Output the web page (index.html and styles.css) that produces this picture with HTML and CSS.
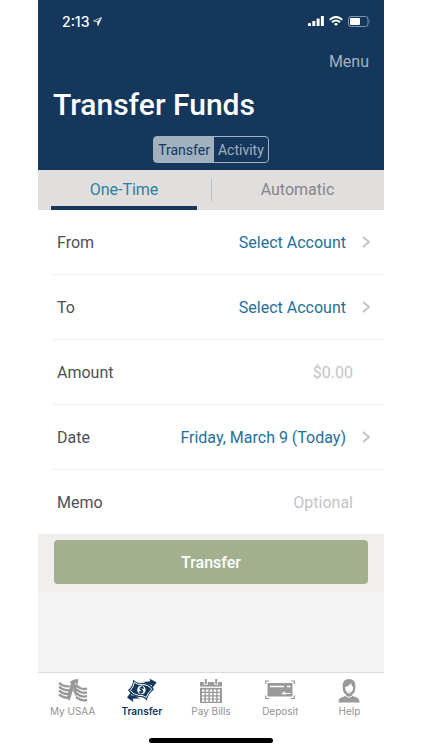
FILE: index.html
```html
<!DOCTYPE html>
<html lang="en">
<head>
    <meta charset="UTF-8">
    <meta name="viewport" content="width=device-width, initial-scale=1.0">
    <title>Transfer Funds</title>
    <link rel="stylesheet" href="styles.css">
</head>
<body>
    <div class="app">
        <header class="header">
            <div class="status-bar">
                <span class="time">2:13
                    <svg width="9" height="9" viewBox="0 0 9 9"><path d="M8.5 0.5 L5 8.5 L4.4 4.6 L0.5 4 Z" fill="none" stroke="#fff" stroke-width="0.7"/><path d="M8.5 0.5 L5 8.5 L4.4 4.6 Z" fill="#fff"/></svg>
                </span>
                <span class="status-icons">
                    <svg width="16" height="10" viewBox="0 0 16 10" fill="#fff"><rect x="0" y="7" width="3" height="3" rx=".6"/><rect x="4.3" y="5" width="3" height="5" rx=".6"/><rect x="8.6" y="2.6" width="3" height="7.4" rx=".6"/><rect x="12.9" y="0" width="3" height="10" rx=".6"/></svg>
                    <svg width="14" height="10" viewBox="0 0 14 10" fill="none" stroke="#fff" stroke-width="1.9"><path d="M0.7 3.7 Q7 -1.9 13.3 3.7"/><path d="M3 6.3 Q7 2.8 11 6.3"/><path d="M7 9.9 L5 7.9 Q7 6.3 9 7.9 Z" fill="#fff" stroke="none"/></svg>
                    <svg width="23" height="11" viewBox="0 0 23 11"><rect x=".5" y=".5" width="19.5" height="10" rx="2.5" fill="none" stroke="#8296ab"/><rect x="2" y="2" width="10" height="7" rx="1" fill="#fff"/><path d="M21 3.8 Q22.6 5.5 21 7.2 Z" fill="#8296ab"/></svg>
                </span>
            </div>
            <button type="button" class="menu">Menu</button>
            <h1>Transfer Funds</h1>
            <div class="switch">
                <button type="button" class="switch-item selected">Transfer</button>
                <button type="button" class="switch-item">Activity</button>
            </div>
        </header>

        <nav class="tabs">
            <a href="#one-time" class="tab active">One-Time</a>
            <a href="#automatic" class="tab">Automatic</a>
        </nav>

        <form class="transfer-form">
            <div class="row">
                <label for="from">From</label>
                <button type="button" id="from" class="picker">Select Account
                    <svg width="8" height="12" viewBox="0 0 8 12"><path d="M1 1 L7 6 L1 11"/></svg>
                </button>
            </div>
            <div class="row">
                <label for="to">To</label>
                <button type="button" id="to" class="picker">Select Account
                    <svg width="8" height="12" viewBox="0 0 8 12"><path d="M1 1 L7 6 L1 11"/></svg>
                </button>
            </div>
            <div class="row">
                <label for="amount">Amount</label>
                <input type="text" id="amount" inputmode="decimal" placeholder="$0.00">
            </div>
            <div class="row">
                <label for="date">Date</label>
                <button type="button" id="date" class="picker">Friday, March 9 (Today)
                    <svg width="8" height="12" viewBox="0 0 8 12"><path d="M1 1 L7 6 L1 11"/></svg>
                </button>
            </div>
            <div class="row">
                <label for="memo">Memo</label>
                <input type="text" id="memo" placeholder="Optional">
            </div>
            <div class="submit-area">
                <button type="submit" class="submit">Transfer</button>
            </div>
        </form>

        <footer class="bottom-bar">
            <nav class="bottom-nav">
                <a href="#home">
                    <svg width="30" height="26" viewBox="0 0 30 26">
                        <g fill="none" stroke="#999" stroke-width="2.4">
                            <path d="M1 5 L4 7 Q7 8.6 11.5 8.4"/>
                            <path d="M1 8.8 L4 10.8 Q7 12.4 11 12.2"/>
                            <path d="M1 12.6 L4 14.6 Q7 16.2 11 16"/>
                            <path d="M1 16.4 L4 18.4 Q7 20 10 19.8"/>
                            <path d="M18 7.5 L22 10 Q25 11.6 29 10.6"/>
                            <path d="M18 11.3 L22 13.8 Q25 15.4 29 14.4"/>
                            <path d="M18 15.1 L22 17.6 Q25 19.2 29 18.2"/>
                            <path d="M18 18.9 L22 21.4 Q25 23 29 22"/>
                        </g>
                        <path d="M8.6 20.5 L13 4.8 L11.2 4.4 Q15 1 20.4 1 L19.6 7 L17.2 4.8 L11.8 22.4 Z" fill="#999"/>
                        <path d="M15.4 6 L18.6 6.5 V20 L15.2 13 Z" fill="#999"/>
                    </svg>
                    My USAA
                </a>
                <a href="#transfer" class="current">
                    <svg width="30" height="26" viewBox="0 0 30 26">
                        <path d="M6.5 1.5 Q9 5.5 15 4.8 Q23 4.5 27 11.5 Q22.5 14 19.5 22.5 Q17 18.5 11.5 19 Q5 18.5 1 12 Q5.5 9 6.5 1.5 Z" fill="#14375b"/>
                        <path d="M7.4 4.2 Q10 7 15 6.5 Q21.5 6.5 24.8 11.3 Q21.4 14 19.2 19.6 Q16.5 17 11.8 17.3 Q6.5 17 3.2 12.4 Q6.6 9.4 7.4 4.2 Z" fill="none" stroke="#fff" stroke-width="1"/>
                        <ellipse cx="14.4" cy="11.9" rx="4.2" ry="4.4" fill="#fff"/>
                        <path d="M16.8 10.6 Q15.8 8.9 14.2 9.3 Q12.5 10.1 13.4 11.4 L15.4 12.5 Q16.4 13.9 14.7 14.7 Q13 14.9 12.2 13.4 M15.4 8 L13.5 16" fill="none" stroke="#14375b" stroke-width="1.2"/>
                        <path d="M16 3.4 Q20 4 23.2 3.2 L22.6 .8 L29.5 4.3 L25.5 10 L24.8 7.3 Q20 7 16 3.4 Z M13 20.8 Q9 20 5.8 20.8 L6.4 24 L0 19.5 L3.6 14.4 L4.4 17.2 Q8.8 17.2 13 20.8 Z" fill="#14375b"/>
                    </svg>
                    Transfer
                </a>
                <a href="#bills">
                    <svg width="30" height="26" viewBox="0 0 30 26">
                        <path d="M4 4 H26 V25 H4 Z" fill="#999"/>
                        <path d="M4 9.2 H26" stroke="#fff" stroke-width="1.3"/>
                        <path d="M9.8 1 V6.8 M20.2 1 V6.8" stroke="#fff" stroke-width="4"/>
                        <path d="M9.8 1 V6 M20.2 1 V6" stroke="#999" stroke-width="2"/>
                        <path d="M6 12.7 H24 M6 16.1 H24 M6 19.5 H24 M6 22.7 H24" stroke="#fff" stroke-width="2.2" stroke-dasharray="2.5 1.4"/>
                    </svg>
                    Pay Bills
                </a>
                <a href="#deposit">
                    <svg width="30" height="26" viewBox="0 0 30 26">
                        <path d="M2.5 5 H27.5 V18.5 H2.5 Z" fill="#999"/>
                        <path d="M4 3 H.6 V6 M26 3 H29.4 V6 M4 20.5 H.6 V17.5 M26 20.5 H29.4 V17.5" fill="none" stroke="#999" stroke-width="1.2"/>
                        <path d="M5 8.5 H19 M22 8.5 H25.5" stroke="#fff" stroke-width="1.7"/>
                        <path d="M17 15.5 H25.5 M20 13.7 L17.5 15.7 L20.5 16.1" fill="none" stroke="#fff" stroke-width="1.1"/>
                    </svg>
                    Deposit
                </a>
                <a href="#help">
                    <svg width="30" height="26" viewBox="0 0 30 26">
                        <path d="M8.6 8 Q8.6 1 15 1 Q21.4 1 21.4 8 Q21.6 14 19 16 Q15 18 11 16 Q8.4 13 8.6 8 Z" fill="#999"/>
                        <path d="M11 9 Q15 8.6 17 5 Q17.6 8 19.2 9 Q19.2 12.5 17.5 14.3 L14 13.3 L16.8 15 Q15.2 16.2 13.4 14.8 Q11 12.8 11 9 Z" fill="#fff"/>
                        <path d="M4.5 24.5 Q4.5 20 8 19.2 L11.5 18 L12.5 16 H17.5 L18.5 18 L22 19.2 Q25.5 20 25.5 24.5 Z" fill="#999"/>
                        <path d="M12 18 Q15 21 18 18" fill="none" stroke="#fff" stroke-width="1"/>
                    </svg>
                    Help
                </a>
            </nav>
            <div class="home-indicator"></div>
        </footer>
    </div>
</body>
</html>
```

FILE: styles.css
```css
* {
    box-sizing: border-box;
}

body {
    margin: 0;
    background-color: #fff;
    font-family: Roboto, sans-serif;
    font-size: 16px;
    color: #4d4f57;
}

button, input {
    font: inherit;
    border: none;
    background: none;
    padding: 0;
}

button {
    cursor: pointer;
}

a {
    text-decoration: none;
}

svg {
    flex: none;
}

.app {
    display: flex;
    flex-direction: column;
    min-height: 100vh;
    margin: 0 38px;
    background-color: #f3f3f3;
}

/* Header */
.header {
    display: flex;
    flex-direction: column;
    padding: 11px 15px 7px;
    background-color: #14375b;
    color: #fff;
}

.status-bar {
    display: flex;
    justify-content: space-between;
    align-items: center;
    height: 20px;
    padding-left: 9px;
}

.time {
    display: flex;
    align-items: center;
    gap: 4px;
    font-family: Inter, sans-serif;
    font-size: 14px;
    font-weight: 500;
}

.status-icons {
    display: flex;
    align-items: center;
    gap: 5px;
    margin-right: -2px;
}

.menu {
    align-self: flex-end;
    margin-top: 20px;
    line-height: 22px;
    color: #a1b1c0;
}

h1 {
    margin: 12px 0 11px;
    font-size: 30px;
    line-height: 40px;
    font-weight: 500;
}

.switch {
    display: flex;
    align-self: center;
    border: 1px solid #a1b1c0;
    border-radius: 4px;
    height: 27px;
}

.switch-item {
    padding: 0 4px;
    font-size: 14px;
    color: #a1b1c0;
}

.switch-item.selected {
    background-color: #a1b1c0;
    color: #14375b;
}

/* Tabs */
.tabs {
    display: grid;
    grid-template-columns: 1fr 1fr;
    background-color: #e0dfdd;
}

.tab {
    position: relative;
    height: 40px;
    line-height: 40px;
    text-align: center;
    color: #86868a;
}

.tab + .tab::before {
    content: "";
    position: absolute;
    left: 0;
    top: 9px;
    height: 22px;
    border-left: 1px solid #bbbcc0;
}

.tab.active {
    margin: 0 14px 0 13px;
    color: #2b7fa5;
    border-bottom: 4px solid #14375b;
}

/* Form */
.transfer-form {
    background-color: #fff;
}

.row {
    display: flex;
    align-items: center;
    justify-content: space-between;
    height: 64px;
    margin-left: 14px;
    padding: 0 14px 0 5px;
}

.row + .row {
    height: 65px;
    border-top: 1px solid #f0f0f0;
}

.picker {
    display: flex;
    align-items: center;
    gap: 16px;
    color: #1f6f9c;
}

.picker svg {
    fill: none;
    stroke: #c4c4c8;
    stroke-width: 2;
}

.row input {
    flex: 1;
    min-width: 0;
    padding-right: 17px;
    text-align: right;
    color: #1f6f9c;
}

.row input::placeholder {
    color: #c3c4c8;
}

.submit-area {
    padding: 6px 16px 8px;
    background-color: #f0efee;
}

.submit {
    width: 100%;
    height: 44px;
    border-radius: 4px;
    background-color: #a2b08d;
    color: #fff;
    font-weight: 500;
}

/* Bottom bar */
.bottom-bar {
    margin-top: auto;
    border-top: 1px solid #dcdcdc;
    background-color: #fff;
}

.bottom-nav {
    display: flex;
    padding-top: 5px;
}

.bottom-nav a {
    flex: 1;
    display: flex;
    flex-direction: column;
    align-items: center;
    font-family: Inter, sans-serif;
    font-size: 10px;
    line-height: 15px;
    color: #929292;
}

.bottom-nav a.current {
    color: #14375b;
    font-weight: 600;
}

.home-indicator {
    width: 124px;
    height: 5px;
    margin: 19px auto 7px;
    border-radius: 3px;
    background-color: #000;
}
```
